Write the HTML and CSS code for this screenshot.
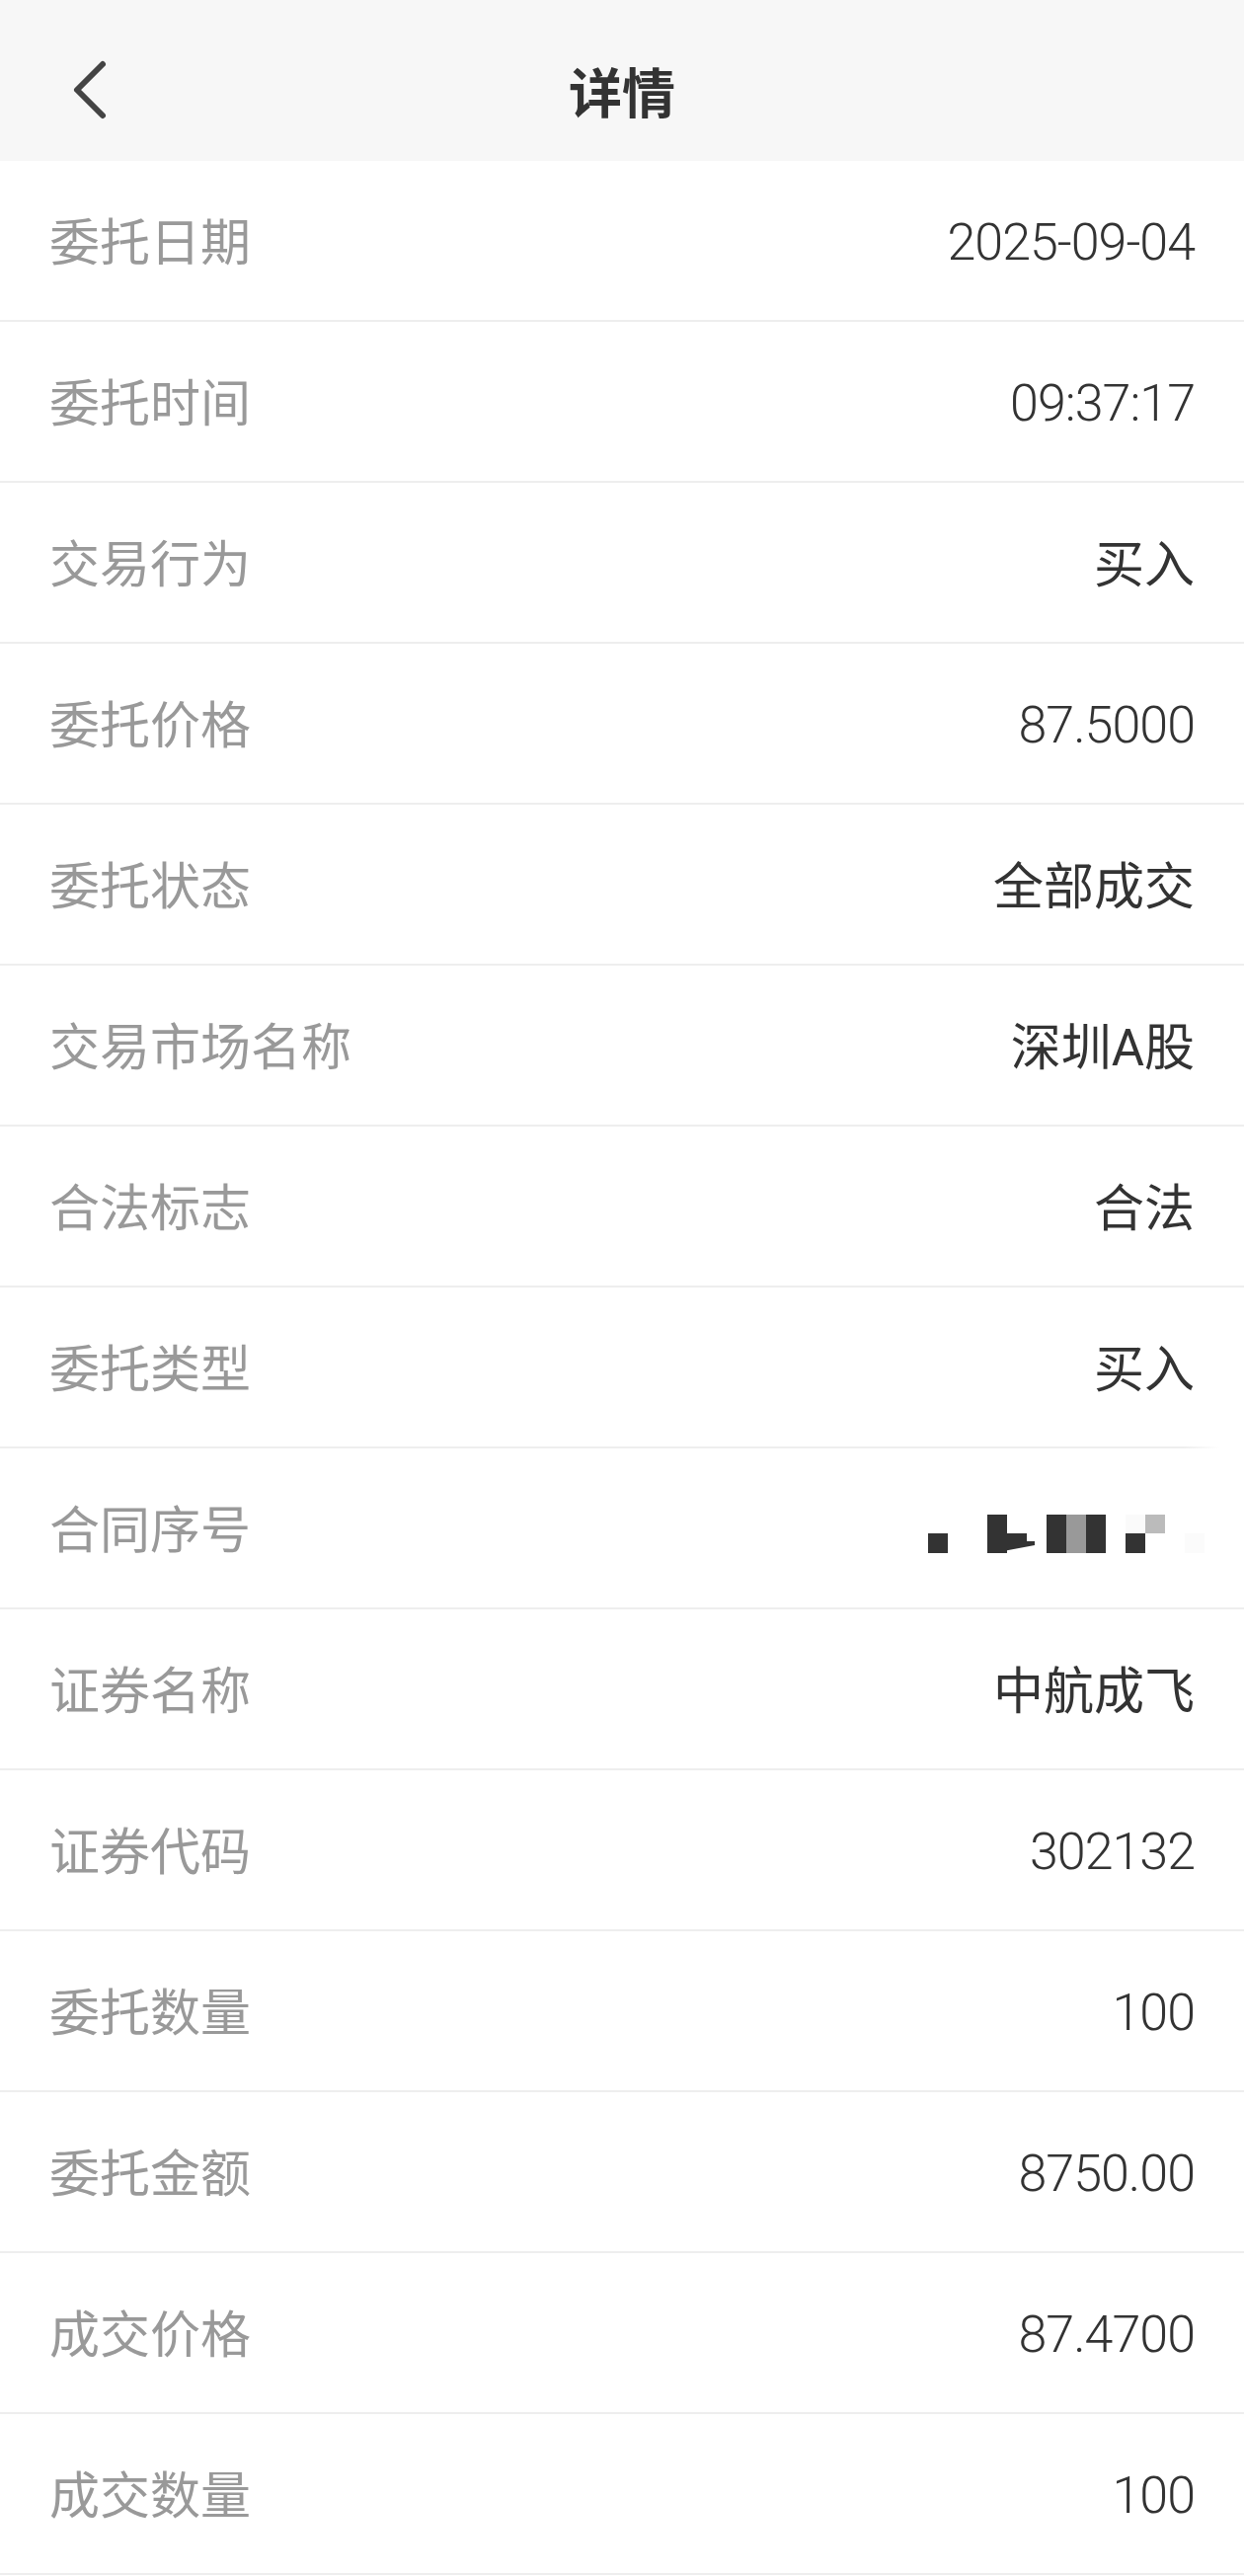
FILE: index.html
```html
<!DOCTYPE html>
<html lang="zh-CN">
<head>
    <meta charset="UTF-8">
    <meta name="viewport" content="width=device-width, initial-scale=1.0">
    <title>详情</title>
    <link rel="stylesheet" href="styles.css">
</head>
<body>
    <div class="header">
        <span class="back">
            <svg width="40" height="64" viewBox="0 0 40 64">
                <polyline points="32,6 6,32 32,58" fill="none" stroke="#444" stroke-width="6" stroke-linecap="round" stroke-linejoin="round"/>
            </svg>
        </span>
        <h1 class="title">详情</h1>
    </div>
    <div class="list">
        <div class="row"><span class="label">委托日期</span><span class="value num">2025-09-04</span></div>
        <div class="row"><span class="label">委托时间</span><span class="value num">09:37:17</span></div>
        <div class="row"><span class="label">交易行为</span><span class="value">买入</span></div>
        <div class="row"><span class="label">委托价格</span><span class="value num">87.5000</span></div>
        <div class="row"><span class="label">委托状态</span><span class="value">全部成交</span></div>
        <div class="row"><span class="label">交易市场名称</span><span class="value">深圳A股</span></div>
        <div class="row"><span class="label">合法标志</span><span class="value">合法</span></div>
        <div class="row row-fade"><span class="label">委托类型</span><span class="value">买入</span></div>
        <div class="row">
            <span class="label">合同序号</span>
            <!-- 打码的序号 -->
            <svg class="masked" width="300" height="60" viewBox="0 0 300 60">
                <rect x="18" y="30" width="20" height="20" fill="#333"/>
                <rect x="78" y="11" width="20" height="39" fill="#333"/>
                <polygon points="98,30 118,30 118,38 126,38 126,42 84,50 98,50" fill="#333"/>
                <rect x="138" y="11" width="20" height="39" fill="#333"/>
                <rect x="158" y="11" width="20" height="39" fill="#999"/>
                <rect x="178" y="11" width="20" height="39" fill="#333"/>
                <rect x="218" y="11" width="20" height="19" fill="#fafafa"/>
                <rect x="218" y="30" width="20" height="20" fill="#333"/>
                <rect x="238" y="11" width="20" height="19" fill="#bbb"/>
                <rect x="278" y="30" width="20" height="20" fill="#fbfbfb"/>
            </svg>
        </div>
        <div class="row"><span class="label">证券名称</span><span class="value">中航成飞</span></div>
        <div class="row"><span class="label">证券代码</span><span class="value num">302132</span></div>
        <div class="row"><span class="label">委托数量</span><span class="value num">100</span></div>
        <div class="row"><span class="label">委托金额</span><span class="value num">8750.00</span></div>
        <div class="row"><span class="label">成交价格</span><span class="value num">87.4700</span></div>
        <div class="row"><span class="label">成交数量</span><span class="value num">100</span></div>
    </div>
</body>
</html>
```

FILE: styles.css
```css
body {
    margin: 0;
    padding: 0;
    background-color: #fff;
    font-family: Roboto, "Noto Sans CJK SC", sans-serif;
}
.header {
    position: relative;
    height: 143px;
    padding-top: 20px;
    background-color: #f7f7f7;
    display: flex;
    align-items: center;
    justify-content: center;
}
.back {
    position: absolute;
    left: 72px;
    top: 59px;
    display: flex;
}
.title {
    margin: 0;
    font-family: "Noto Sans CJK SC", sans-serif;
    font-size: 54px;
    font-weight: 700;
    color: #333;
    line-height: 1;
}
.row {
    height: 161px;
    padding: 0 50px;
    display: flex;
    align-items: center;
    justify-content: space-between;
    border-bottom: 2px solid #eee;
}
.row-fade {
    border-image: linear-gradient(to right, #eee 95%, rgba(238, 238, 238, 0) 98%) 1;
}
.label {
    font-family: "Noto Sans CJK SC", sans-serif;
    font-size: 51px;
    color: #999;
    margin-top: -3px;
}
.value {
    font-size: 51px;
    color: #333;
    margin-top: -3px;
}
.value.num {
    font-size: 52px;
    font-weight: 300;
    letter-spacing: -1px;
    margin-top: 4px;
}
.masked {
    margin-top: 11px;
    margin-right: -12px;
}
```
